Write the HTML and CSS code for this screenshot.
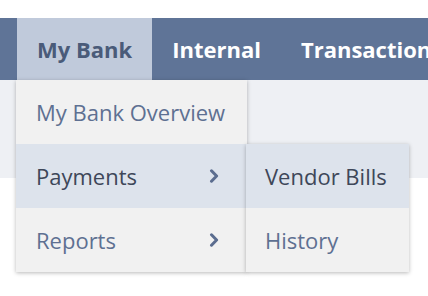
FILE: index.html
```html
<!DOCTYPE html>
<html lang="en">
<head>
    <meta charset="UTF-8">
    <meta name="viewport" content="width=device-width, initial-scale=1.0">
    <title>My Bank</title>
    <link rel="stylesheet" href="styles.css">
</head>
<body>
    <div class="top"></div>
    <div class="nav">
        <div class="tab active">
            My Bank
            <ul class="menu">
                <li>My Bank Overview</li>
                <li class="hl dark">Payments
                    <svg class="chev" width="10" height="14" viewBox="0 0 10 14"><path d="M2.5 1.8 L7.6 7 L2.5 12.2" fill="none" stroke="#5b6d8f" stroke-width="3" stroke-linecap="round" stroke-linejoin="round"/></svg>
                    <ul class="sub">
                        <li class="hl dark">Vendor Bills</li>
                        <li>History</li>
                    </ul>
                </li>
                <li>Reports
                    <svg class="chev" width="10" height="14" viewBox="0 0 10 14"><path d="M2.5 1.8 L7.6 7 L2.5 12.2" fill="none" stroke="#5b6d8f" stroke-width="3" stroke-linecap="round" stroke-linejoin="round"/></svg>
                </li>
            </ul>
        </div>
        <div class="tab">Internal</div>
        <div class="tab">Transactions</div>
    </div>
    <div class="page"></div>
</body>
</html>
```

FILE: styles.css
```css
html, body {
    min-height: 296px;
}
html {
    overflow: hidden;
}
body {
    margin: 0;
    font-family: "Open Sans", "Liberation Sans", sans-serif;
    background: #fff;
}
.top {
    height: 18px;
}
.nav {
    display: flex;
    height: 62px;
    background: #5f7497;
    padding-left: 17px;
    white-space: nowrap;
}
.tab {
    position: relative;
    padding: 0 20px;
    font-size: 22px;
    font-weight: bold;
    color: #fff;
    line-height: 62px;
}
.tab.active {
    background: #c0cadb;
    color: #4a5b79;
}
.page {
    height: 98px;
    background: #eef0f4;
}
.menu, .sub {
    list-style: none;
    margin: 0;
    padding: 0;
    position: absolute;
    background: #f1f1f1;
    font-weight: normal;
    box-shadow: 0 1px 4px rgba(0, 0, 0, 0.28);
    z-index: 2;
}
.menu {
    top: 62px;
    left: -1px;
    width: 231px;
}
.sub {
    top: 0;
    left: 230px;
    width: 163px;
}
.menu li {
    position: relative;
    height: 64px;
    line-height: 64px;
    padding-left: 20px;
    font-size: 22px;
    color: #5e7092;
}
.sub li {
    padding-left: 19px;
}
.menu li.hl {
    background: #dde3ec;
}
.menu li.dark {
    color: #3e4759;
}
.chev {
    position: absolute;
    left: 193px;
    top: 25px;
}
```
